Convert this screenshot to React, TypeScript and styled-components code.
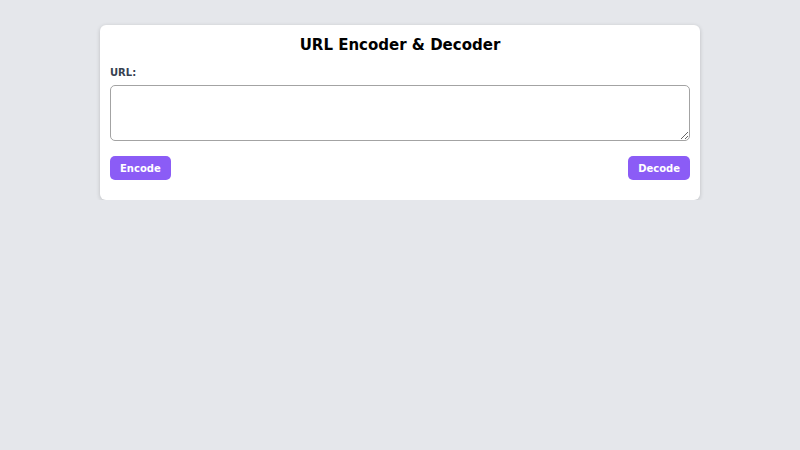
import React, { useState } from 'react';
import styled, { createGlobalStyle } from 'styled-components';

const GlobalStyle = createGlobalStyle`
	body {
		margin: 0;
		background: #e5e7eb;
		font-family: 'DejaVu Sans', sans-serif;
	}
`;

const Page = styled.div`
	display: flex;
	justify-content: center;
	padding-top: 25px;
`;

const Card = styled.div`
	width: 600px;
	box-sizing: border-box;
	background: #ffffff;
	border-radius: 6px;
	box-shadow: 0 1px 4px rgba(0, 0, 0, 0.18);
	padding: 11px 10px 20px;
`;

const Title = styled.h1`
	margin: 0 0 12px;
	text-align: center;
	font-size: 15px;
	line-height: 18px;
	font-weight: bold;
	color: #000000;
`;

const Label = styled.label`
	display: block;
	font-size: 10px;
	font-weight: bold;
	color: #374151;
	line-height: 14px;
	margin-bottom: 5px;
`;

const Input = styled.textarea`
	display: block;
	width: 100%;
	height: 56px;
	box-sizing: border-box;
	border: 1px solid #a3a3a3;
	border-radius: 5px;
	padding: 6px;
	font-family: inherit;
	font-size: 12px;
	resize: vertical;
`;

const Actions = styled.div`
	display: flex;
	justify-content: space-between;
	margin-top: 15px;
`;

const Button = styled.button`
	height: 24px;
	padding: 0 10px;
	border: none;
	border-radius: 5px;
	background: #8b5cf6;
	color: #ffffff;
	font-family: inherit;
	font-size: 10px;
	font-weight: bold;
	cursor: pointer;
`;

const App = () => {
	const [value, setValue] = useState('');

	const encode = () => setValue(encodeURIComponent(value));
	const decode = () => {
		try {
			setValue(decodeURIComponent(value));
		} catch (e) {
			// leave it as is
		}
	};

	return (
		<>
			<GlobalStyle />
			<Page>
				<Card>
					<Title>URL Encoder &amp; Decoder</Title>
					<Label htmlFor='url'>URL:</Label>
					<Input id='url' value={value} onChange={(e) => setValue(e.target.value)} />
					<Actions>
						<Button onClick={encode}>Encode</Button>
						<Button onClick={decode}>Decode</Button>
					</Actions>
				</Card>
			</Page>
		</>
	);
};

export default App;
